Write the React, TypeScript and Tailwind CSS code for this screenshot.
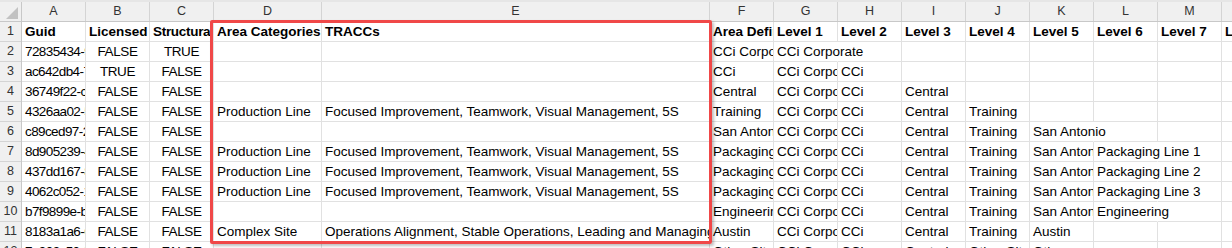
import React from "react";

type C = { t?: string; a?: "l" | "c"; o?: boolean; k?: string };

const colW = [
  "w-[64px]", "w-[64px]", "w-[64px]", "w-[108px]", "w-[388px]",
  "w-[64px]", "w-[64px]", "w-[64px]", "w-[64px]", "w-[64px]",
  "w-[64px]", "w-[64px]", "w-[64px]", "w-[64px]",
];
const letters = ["A", "B", "C", "D", "E", "F", "G", "H", "I", "J", "K", "L", "M", "N"];

const FI = "Focused Improvement, Teamwork, Visual Management, 5S";
const CC = "CCi Corporate";

function row(
  a: string, b: string, c: string, d: string, e: string, f: string,
  g: string, h: string, i: string, j: string, k: string, l: string,
  opts: { g?: boolean; k?: boolean; l?: boolean } = {}
): C[] {
  return [
    { t: a, k: "tracking-[-0.6px]" },
    { t: b, a: "c", k: "tracking-[-0.4px]" },
    { t: c, a: "c", k: "tracking-[-0.4px]" },
    { t: d },
    { t: e },
    { t: f },
    { t: g, o: opts.g },
    { t: h },
    { t: i },
    { t: j },
    { t: k, o: opts.k },
    { t: l, o: opts.l },
    {},
    {},
  ];
}

const header: C[] = [
  { t: "Guid" }, { t: "Licensed" }, { t: "Structural", k: "tracking-[-0.3px]" }, { t: "Area Categories" },
  { t: "TRACCs" }, { t: "Area Definition" }, { t: "Level 1" }, { t: "Level 2" },
  { t: "Level 3" }, { t: "Level 4" }, { t: "Level 5" }, { t: "Level 6" },
  { t: "Level 7" }, { t: "Level 8" },
];

const rows: C[][] = [
  row("72835434-9b1e-4c", "FALSE", "TRUE", "", "", CC, CC, "", "", "", "", "", { g: true }),
  row("ac642db4-7e2a-41", "TRUE", "FALSE", "", "", "CCi", CC, "CCi", "", "", "", ""),
  row("36749f22-c1d8-4a", "FALSE", "FALSE", "", "", "Central", CC, "CCi", "Central", "", "", ""),
  row("4326aa02-5f3c-49", "FALSE", "FALSE", "Production Line", FI, "Training", CC, "CCi", "Central", "Training", "", ""),
  row("c89ced97-2b6e-4f", "FALSE", "FALSE", "", "", "San Antonio", CC, "CCi", "Central", "Training", "San Antonio", "", { k: true }),
  row("8d905239-4a7c-42", "FALSE", "FALSE", "Production Line", FI, "Packaging Line 1", CC, "CCi", "Central", "Training", "San Antonio", "Packaging Line 1", { l: true }),
  row("437dd167-8e3b-4d", "FALSE", "FALSE", "Production Line", FI, "Packaging Line 2", CC, "CCi", "Central", "Training", "San Antonio", "Packaging Line 2", { l: true }),
  row("4062c052-1d9f-47", "FALSE", "FALSE", "Production Line", FI, "Packaging Line 3", CC, "CCi", "Central", "Training", "San Antonio", "Packaging Line 3", { l: true }),
  row("b7f9899e-b2c4-4e", "FALSE", "FALSE", "", "", "Engineering", CC, "CCi", "Central", "Training", "San Antonio", "Engineering", { l: true }),
  row("8183a1a6-6c2d-48", "FALSE", "FALSE", "Complex Site", "Operations Alignment, Stable Operations, Leading and Managing Change", "Austin", CC, "CCi", "Central", "Training", "Austin", ""),
  row("7e909c50-3a1b-46", "FALSE", "FALSE", "", "", "Other Sites", CC, "CCi", "Central", "Other Sites", "Other", ""),
];

function Cell({ c, w, bold }: { c: C; w: string; bold?: boolean }) {
  const base =
    "h-5 shrink-0 border-b border-r border-[#e1e1e1] leading-[19px] whitespace-nowrap";
  const ov = c.o ? "overflow-visible border-r-transparent" : "overflow-hidden";
  const al = c.a === "c" ? "text-center" : "pl-[3px] text-left";
  return (
    <div className={`${base} ${ov} ${w}`}>
      <div className={`${al} ${bold ? "font-bold" : ""} ${c.k ?? ""}`}>{c.t}</div>
    </div>
  );
}

export default function App() {
  return (
    <div
      className="relative h-[248px] w-[1232px] overflow-hidden bg-white text-[13.5px] text-black"
      style={{ fontFamily: '"Liberation Sans", Arial, sans-serif' }}
    >
      {/* column header */}
      <div className="flex h-[22px] border-b border-[#c8c8c8] bg-[#f0f0f0] border-t-2 border-t-[#e6e6e6]">
        <div className="relative flex w-[22px] shrink-0 items-center justify-center border-r border-[#c8c8c8]">
          <svg width="22" height="19" className="absolute left-0 top-0">
            <polygon points="18,5 18,17 6,17" fill="#c2c2c2" />
          </svg>
        </div>
        {letters.map((l, i) => (
          <div
            key={l}
            className={`${colW[i]} flex shrink-0 items-center justify-center border-r border-[#d4d4d4] text-[12.5px] text-[#333]`}
          >
            {l}
          </div>
        ))}
      </div>

      {/* body */}
      <div className="flex">
        <div className="w-[22px] shrink-0 border-r border-[#c8c8c8] bg-[#f0f0f0]">
          {Array.from({ length: 12 }, (_, i) => (
            <div
              key={i}
              className="flex h-5 items-center justify-center border-b border-[#d4d4d4] text-[12.5px] text-[#333]"
            >
              {i + 1}
            </div>
          ))}
        </div>
        <div className="flex flex-col">
          <div className="flex">
            {header.map((c, i) => (
              <Cell key={i} c={c} w={colW[i]} bold />
            ))}
          </div>
          {rows.map((r, ri) => (
            <div className="flex" key={ri}>
              {r.map((c, i) => (
                <Cell key={i} c={c} w={colW[i]} />
              ))}
            </div>
          ))}
        </div>
      </div>

      {/* selection highlight */}
      <div className="pointer-events-none absolute left-[210px] top-[20px] h-[224px] w-[502px] rounded-[2px] border-[3px] border-[#f04848] shadow-[2px_2px_3px_rgba(0,0,0,0.25)]" />
    </div>
  );
}
